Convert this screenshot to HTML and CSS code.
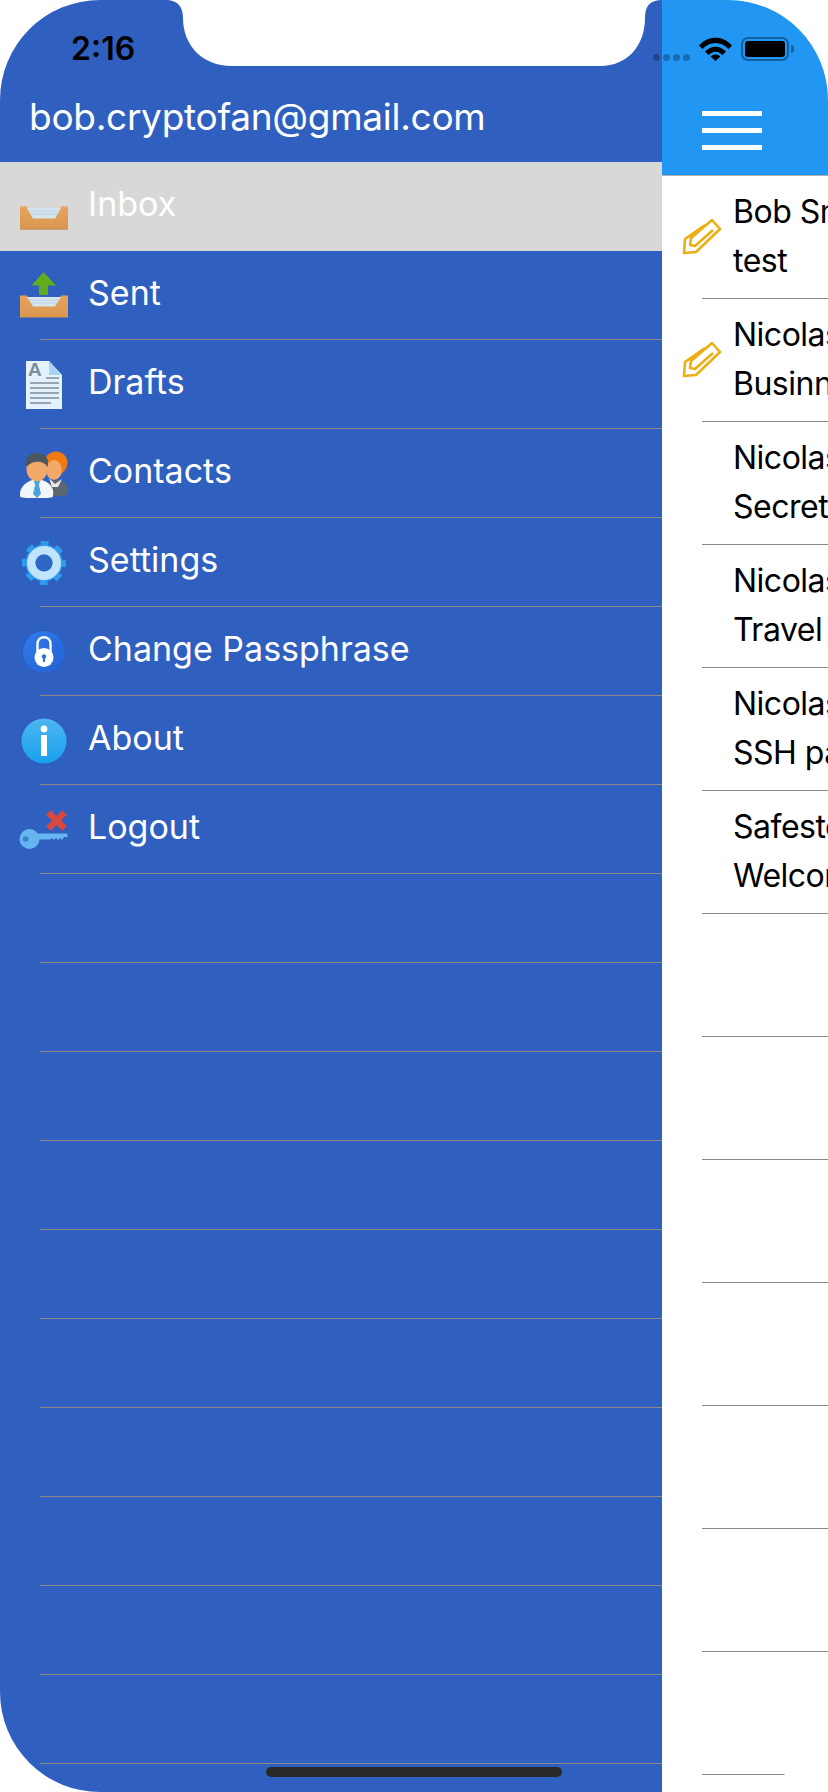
FILE: index.html
```html
<!DOCTYPE html>
<html lang="en">
<head>
  <meta charset="UTF-8">
  <title>Safester</title>
  <link rel="stylesheet" href="styles.css">
</head>
<body>
<div class="screen">

  <aside class="drawer">
    <div class="status-left"><span class="clock">2:16</span></div>
    <div class="account">bob.cryptofan@gmail.com</div>
    <ul class="menu">
      <li class="menu-item selected">
        <svg class="menu-icon" viewBox="0 0 48 48">
          <defs>
            <linearGradient id="tray" x1="0" y1="0" x2="0" y2="1"><stop offset="0" stop-color="#e8a45c"/><stop offset="1" stop-color="#d9964f"/></linearGradient>
          </defs>
          <path d="M0 23.500H7L13 35H35L41 23.500H48V46.500H0Z" fill="url(#tray)"/>
          <path d="M7 25H41L35 35.500H13Z" fill="#d5e4ef"/>
          <path d="M9 28H39M11 31H37" stroke="#bcd2e2" stroke-width="1"/>
          <path d="M0 46H48" stroke="#c48f63" stroke-width="1"/>
        </svg>
        <span class="menu-label">Inbox</span>
      </li>
      <li class="menu-item">
        <svg class="menu-icon" viewBox="0 0 48 48">
          <path d="M0 23.500H7L13 34H35L41 23.500H48V45.500H0Z" fill="url(#tray)"/>
          <path d="M7 25H41L35 34.500H13Z" fill="#d5e4ef"/>
          <path d="M9 28H39M11 31H37" stroke="#bcd2e2" stroke-width="1"/>
          <path d="M23.500 0L36 13.500H28V23H19V13.500H11.500Z" fill="#62ad1c"/>
        </svg>
        <span class="menu-label">Sent</span>
      </li>
      <li class="menu-item">
        <svg class="menu-icon" viewBox="0 0 48 48">
          <path d="M6 0H29L42 14V48H6Z" fill="#e6f2fb"/>
          <path d="M29 0L42 14H29Z" fill="#a6d4f2"/>
          <text class="doc-letter" x="8" y="15">A</text>
          <path d="M26 17H39M10 22H39M10 27H39M10 32H39M10 37H39M10 42H31" stroke="#7c8c9c" stroke-width="1.6"/>
        </svg>
        <span class="menu-label">Drafts</span>
      </li>
      <li class="menu-item">
        <svg class="menu-icon" viewBox="0 0 48 48">
          <path d="M30 31C36 28 46 30 48 38V42C48 45 44 46 42 46H28Z" fill="#5b6671"/>
          <circle cx="36" cy="13" r="11.500" fill="#ee7a10"/>
          <ellipse cx="34" cy="20" rx="8" ry="10" fill="#f2a868"/>
          <path d="M29 28L35 34L42 29L38 37H32Z" fill="#e8e8e8"/>
          <path d="M0 46C-1 36 8 30 17 29C27 30 35 36 33 46C33 48 28 48 17 48C6 48 0 48 0 46Z" fill="#f3f6f8"/>
          <ellipse cx="17" cy="19" rx="10.500" ry="12.500" fill="#f2a868"/>
          <path d="M6.500 17C4 6 11 3 17 3C24 3 30 7 27.500 17C24 10 12 10 6.500 17Z" fill="#4b5660"/>
          <path d="M14 31H20L19 35L21 44L17 48L13 44L15 35Z" fill="#4ea3dc"/>
        </svg>
        <span class="menu-label">Contacts</span>
      </li>
      <li class="menu-item">
        <svg class="menu-icon" viewBox="0 0 48 48">
          <circle cx="24" cy="24" r="19" fill="none" stroke="#2f9cf0" stroke-width="6" stroke-dasharray="7.5 7.42" stroke-dashoffset="3.750"/>
          <circle cx="24" cy="24" r="18.500" fill="#2f9cf0"/>
          <circle cx="24" cy="24" r="12.750" fill="none" stroke="#bfe4fb" stroke-width="8.500"/>
          <circle cx="24" cy="24" r="8.500" fill="#2d68c4"/>
        </svg>
        <span class="menu-label">Settings</span>
      </li>
      <li class="menu-item">
        <svg class="menu-icon" viewBox="0 0 48 48">
          <defs>
            <linearGradient id="lock" x1="0" y1="0" x2="1" y2="1"><stop offset="0" stop-color="#2e7cf0"/><stop offset="1" stop-color="#2560d0"/></linearGradient>
          </defs>
          <circle cx="24" cy="24" r="21.500" fill="url(#lock)" stroke="#2a5cb8" stroke-width="1"/>
          <path d="M17.500 28V16C17.500 7 30.500 7 30.500 16V28" fill="none" stroke="#fff" stroke-width="2.400"/>
          <circle cx="24" cy="29.500" r="9.500" fill="#fff"/>
          <circle cx="24" cy="28.500" r="2.200" fill="#2a72ea"/>
          <rect x="23" y="29" width="2" height="5" fill="#2a72ea"/>
        </svg>
        <span class="menu-label">Change Passphrase</span>
      </li>
      <li class="menu-item">
        <svg class="menu-icon" viewBox="0 0 48 48">
          <defs>
            <linearGradient id="about" x1="0" y1="0" x2="0" y2="1"><stop offset="0" stop-color="#4db6ef"/><stop offset="1" stop-color="#18a0ee"/></linearGradient>
          </defs>
          <circle cx="24" cy="24" r="22.500" fill="url(#about)"/>
          <circle cx="24" cy="12" r="3.400" fill="#fff"/>
          <rect x="21" y="18" width="6" height="21" fill="#fff"/>
        </svg>
        <span class="menu-label">About</span>
      </li>
      <li class="menu-item">
        <svg class="menu-icon" viewBox="0 0 48 48">
          <path d="M28.500 6.500L44.500 22.500M44.500 6.500L28.500 22.500" stroke="#d9483f" stroke-width="6.500"/>
          <path d="M14 27.500H47L48 31H44L42 34L40 32L38 34L36 32L34 34L32 32L30 33.500H14Z" fill="#66b5f0"/>
          <circle cx="9.500" cy="33" r="10" fill="#66b5f0"/>
          <circle cx="5.700" cy="33" r="2.800" fill="#3a7fd0"/>
        </svg>
        <span class="menu-label">Logout</span>
      </li>
      <li class="menu-item"></li>
      <li class="menu-item"></li>
      <li class="menu-item"></li>
      <li class="menu-item"></li>
      <li class="menu-item"></li>
      <li class="menu-item"></li>
      <li class="menu-item"></li>
      <li class="menu-item"></li>
      <li class="menu-item"></li>
      <li class="menu-item"></li>
    </ul>
  </aside>

  <main class="inbox">
    <header class="topbar">
      <div class="status-right">
        <svg class="wifi" viewBox="0 0 33 24">
          <path d="M0 8.500C9 -2 24 -2 33 8.500L29.500 12C22.500 4 10.500 4 3.500 12Z"/>
          <path d="M6 14.500C12 8 21 8 27 14.500L23.500 18C19 13.500 14 13.500 9.500 18Z"/>
          <path d="M11.500 19.500C14.500 16.800 18.500 16.800 21.500 19.500L16.500 24Z"/>
        </svg>
        <div class="battery"><div class="battery-level"></div></div>
        <div class="battery-nub"></div>
      </div>
      <div class="burger">
        <div class="burger-line"></div>
        <div class="burger-line"></div>
        <div class="burger-line"></div>
      </div>
    </header>
    <ul class="mail-list">
      <li class="mail-row">
        <svg class="clip" viewBox="0 0 40 37">
          <path class="clip-wire" d="M23 7L3 21L2 35L14 34L38 11L30 2L9 20L8 27L13 28L31 12"/>
        </svg>
        <div class="mail-text"><div>Bob Smith</div><div>test</div></div>
      </li>
      <li class="mail-row">
        <svg class="clip" viewBox="0 0 40 37">
          <path class="clip-wire" d="M23 7L3 21L2 35L14 34L38 11L30 2L9 20L8 27L13 28L31 12"/>
        </svg>
        <div class="mail-text"><div>Nicolas</div><div>Businness</div></div>
      </li>
      <li class="mail-row"><div class="mail-text"><div>Nicolas</div><div>Secret</div></div></li>
      <li class="mail-row"><div class="mail-text"><div>Nicolas</div><div>Travel</div></div></li>
      <li class="mail-row"><div class="mail-text"><div>Nicolas</div><div>SSH pass</div></div></li>
      <li class="mail-row"><div class="mail-text"><div>Safester</div><div>Welcome</div></div></li>
      <li class="mail-row"></li>
      <li class="mail-row"></li>
      <li class="mail-row"></li>
      <li class="mail-row"></li>
      <li class="mail-row"></li>
      <li class="mail-row"></li>
      <li class="mail-row last"></li>
    </ul>
  </main>

  <div class="signal">
    <span class="signal-dot"></span>
    <span class="signal-dot"></span>
    <span class="signal-dot"></span>
    <span class="signal-dot"></span>
  </div>
  <svg class="notch" viewBox="0 0 496 66">
    <path d="M0 0C11 0 17 6 17 18C17 45 36 66 66 66H434C462 66 479 45 479 18C479 6 484 0 496 0Z" fill="#fff"/>
  </svg>
  <div class="home-bar"></div>
</div>
</body>
</html>
```

FILE: styles.css
```css
body {
  margin: 0;
  background-color: #fff;
  font-family: Inter, "Liberation Sans", sans-serif;
}

ul {
  margin: 0;
  padding: 0;
  list-style: none;
}

.screen {
  position: relative;
  display: flex;
  width: 828px;
  height: 1792px;
  overflow: hidden;
  border-radius: 100px;
}

.drawer {
  flex: 0 0 662px;
  background-color: #2f60c0;
  color: white;
}

.status-left {
  height: 96px;
  padding-left: 71px;
}

.clock {
  display: block;
  padding-top: 30px;
  font-size: 32px;
  line-height: 38px;
  font-weight: 600;
  color: black;
}

.account {
  height: 66px;
  padding-left: 29px;
  font-size: 37px;
  line-height: 42px;
  letter-spacing: -0.28px;
}

.menu-item {
  display: flex;
  align-items: center;
  height: 89px;
  box-sizing: border-box;
  padding-left: 20px;
  position: relative;
}

.menu-item::after {
  content: "";
  position: absolute;
  left: 40px;
  right: 0;
  bottom: 0;
  height: 1px;
  background-color: #8c8a80;
}

.menu-item.selected {
  background-color: #d8d8d8;
}

.menu-item.selected::after {
  display: none;
}

.menu-icon {
  width: 48px;
  height: 48px;
  overflow: visible;
  margin-right: 20px;
}

.menu-label {
  font-size: 34px;
  margin-bottom: 7px;
}

.doc-letter {
  font-size: 19px;
  font-weight: 700;
  font-family: "Liberation Sans", sans-serif;
  fill: #7c8c9c;
}

.inbox {
  flex: 0 0 166px;
  overflow: hidden;
}

.topbar {
  height: 175px;
  background-color: #2196f3;
  border-bottom: 1px solid #b0b0b0;
}

.status-right {
  display: flex;
  align-items: center;
  height: 24px;
  padding: 37px 0 0 37px;
}

.wifi {
  width: 33px;
  height: 24px;
  margin-right: 9px;
}

.battery {
  box-sizing: border-box;
  width: 48px;
  height: 24px;
  padding: 2px;
  border: 2px solid #14609f;
  border-radius: 7px;
}

.battery-level {
  height: 100%;
  background-color: black;
  border-radius: 3px;
}

.battery-nub {
  width: 3px;
  height: 8px;
  margin-left: 2px;
  background-color: #14609f;
  border-radius: 0 3px 3px 0;
}

.burger {
  display: flex;
  flex-direction: column;
  gap: 12px;
  width: 60px;
  padding: 50px 0 0 40px;
}

.burger-line {
  height: 3px;
  background-color: white;
  border-bottom: 2px solid rgba(255, 255, 255, 0.5);
}

.mail-row {
  display: flex;
  align-items: center;
  box-sizing: border-box;
  height: 123px;
  position: relative;
  padding: 0 0 4px 71px;
  font-size: 32px;
  line-height: 49px;
  letter-spacing: -0.5px;
  color: black;
  white-space: nowrap;
}

.mail-row::after {
  content: "";
  position: absolute;
  left: 40px;
  right: 0;
  bottom: 0;
  height: 1px;
  background-color: #888;
}

.mail-row.last::after {
  right: 33px;
}

.clip {
  position: absolute;
  left: 20px;
  top: 42px;
  width: 40px;
  height: 37px;
}

.clip-wire {
  fill: none;
  stroke: #edae14;
  stroke-width: 2.6;
  stroke-linejoin: round;
}

.signal {
  position: absolute;
  left: 653px;
  top: 54px;
  display: flex;
  gap: 3px;
}

.signal-dot {
  width: 7px;
  height: 7px;
  border-radius: 50%;
  background-color: rgba(0, 0, 0, 0.28);
}

.notch {
  position: absolute;
  left: 166px;
  top: 0;
  width: 496px;
  height: 66px;
}

.home-bar {
  position: absolute;
  left: 266px;
  top: 1767px;
  width: 296px;
  height: 10px;
  border-radius: 5px;
  background-color: #282828;
}
```
